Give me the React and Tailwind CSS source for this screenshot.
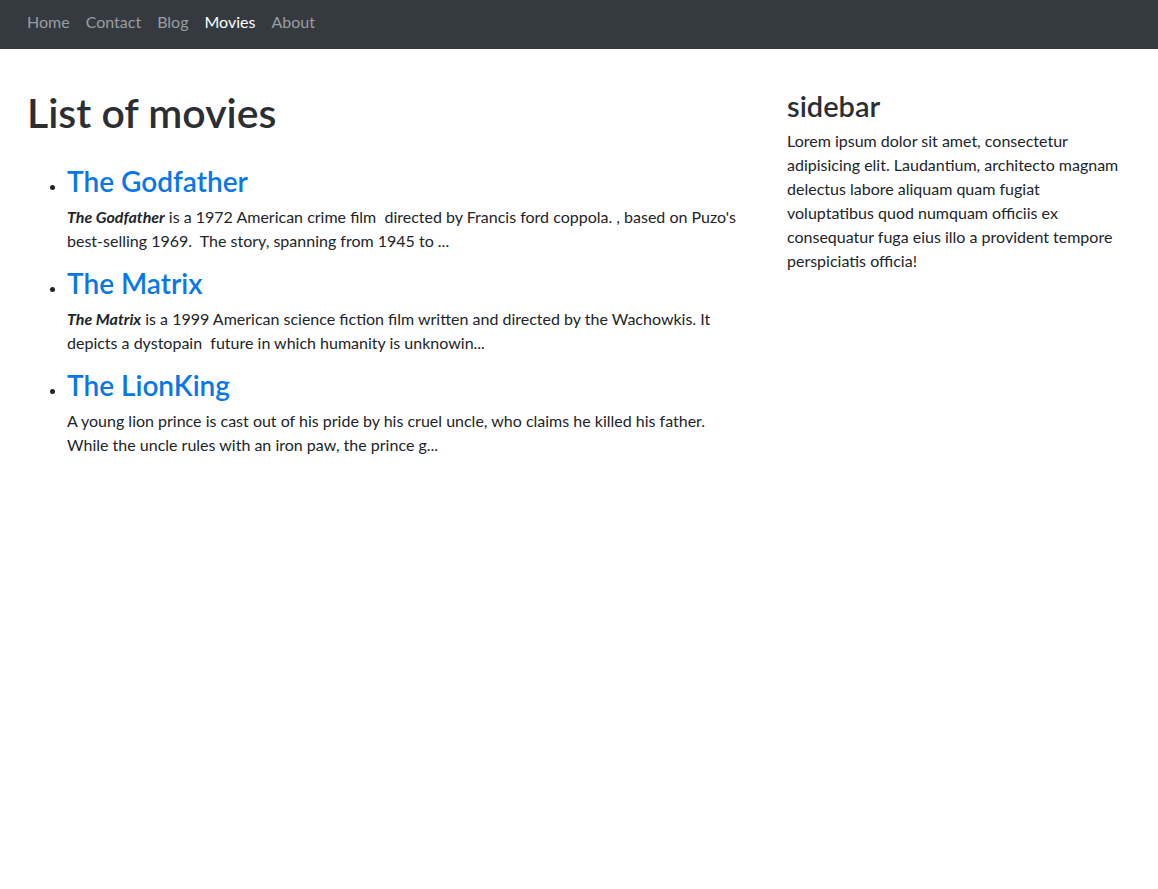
const movies = [
  {
    title: "The Godfather",
    body: (
      <>
        <b>
          <i>The Godfather</i>
        </b>{" "}
        is a 1972 American crime film{"\u00a0"} directed by Francis ford coppola. , based on Puzo's best-selling 1969.{"\u00a0"} The story, spanning from 1945 to ...
      </>
    ),
  },
  {
    title: "The Matrix",
    body: (
      <>
        <b>
          <i>The Matrix</i>
        </b>{" "}
        is a 1999 American science fiction film written and directed by the Wachowkis. It depicts a dystopain{"\u00a0"} future in which humanity is unknowin...
      </>
    ),
  },
  {
    title: "The LionKing",
    body: (
      <>
        A young lion prince is cast out of his pride by his cruel uncle, who claims he killed his father. While the uncle rules with an iron paw, the prince g...
      </>
    ),
  },
];

const navItems = ["Home", "Contact", "Blog", "Movies", "About"];

export default function App() {
  return (
    <div className="min-h-screen bg-white text-[#212529]" style={{ fontFamily: 'Lato, "Noto Sans", sans-serif' }}>
      <nav className="h-[49px] bg-[#343a40] px-[19px] pt-[10px]">
        <ul className="flex text-[16px] leading-[24px]">
          {navItems.map((item) => (
            <li key={item}>
              <a
                href="#"
                className={
                  item === "Movies"
                    ? "block px-2 text-white"
                    : "block px-2 text-[#9a9da0]"
                }
              >
                {item}
              </a>
            </li>
          ))}
        </ul>
      </nav>

      <div className="flex pl-[27px] pt-[39px]">
        <main className="w-[759px] shrink-0">
          <h1 className="mb-[27px] text-[41px] font-semibold leading-[1.2] text-[#2b2f33]">List of movies</h1>
          <ul className="list-disc pl-10">
            {movies.map((m) => (
              <li key={m.title}>
                <h3 className="mb-[7px] text-[28px] font-semibold leading-[34px]">
                  <a href="#" className="text-[#0a77e8]">
                    {m.title}
                  </a>
                </h3>
                <p className="mb-[13px] w-[674px] text-[16px] leading-[24px]">{m.body}</p>
              </li>
            ))}
          </ul>
        </main>

        <aside className="w-[337px] shrink-0 pl-[1px]">
          <h3 className="mt-[1px] mb-[6px] text-[29px] font-semibold leading-[34px] text-[#2b2f33]">sidebar</h3>
          <p className="text-[16px] leading-[24px]">
            Lorem ipsum dolor sit amet, consectetur adipisicing elit. Laudantium, architecto magnam delectus labore aliquam quam fugiat voluptatibus quod numquam officiis ex consequatur fuga eius illo a provident tempore perspiciatis officia!
          </p>
        </aside>
      </div>
    </div>
  );
}
